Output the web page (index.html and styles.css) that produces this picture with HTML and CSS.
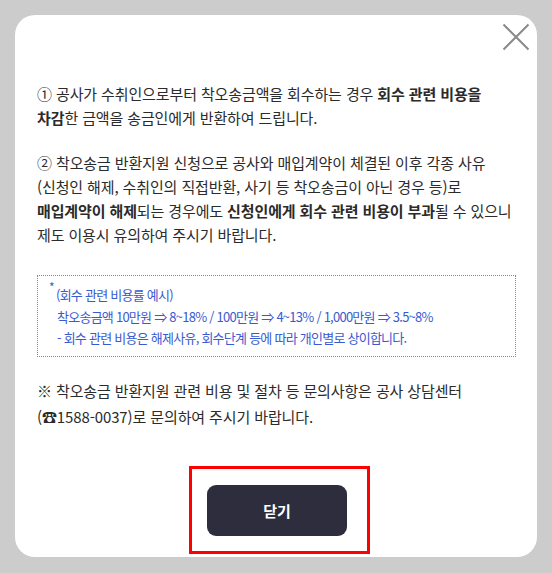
FILE: index.html
```html
<!DOCTYPE html>
<html lang="ko">
<head>
<meta charset="utf-8">
<link rel="stylesheet" href="styles.css">
</head>
<body>
<div class="page">
  <div class="card">
    <div class="card-head">
      <button class="close" aria-label="닫기">
        <svg width="28" height="28" viewBox="0 0 28 28"><path d="M1.5 1.5 L26.5 26.5 M26.5 1.5 L1.5 26.5" stroke="#8a8a8a" stroke-width="2" fill="none"/></svg>
      </button>
    </div>
    <div class="content">
      <p class="para">① 공사가 수취인으로부터 착오송금액을 회수하는 경우 <b>회수 관련 비용을</b><br><b>차감</b>한 금액을 송금인에게 반환하여 드립니다.</p>
      <p class="para">② 착오송금 반환지원 신청으로 공사와 매입계약이 체결된 이후 각종 사유<br>(신청인 해제, 수취인의 직접반환, 사기 등 착오송금이 아닌 경우 등)로<br><b>매입계약이 해제</b>되는 경우에도 <b>신청인에게 회수 관련 비용이 부과</b>될 수 있으니<br>제도 이용시 유의하여 주시기 바랍니다.</p>
      <div class="example">
        <p class="ex-title"><sup class="star">*</sup>(회수 관련 비용률 예시)</p>
        <p class="ex-line">착오송금액 10만원 ⇒ 8~18% / 100만원 ⇒ 4~13% / 1,000만원 ⇒ 3.5~8%</p>
        <p class="ex-line">- 회수 관련 비용은 해제사유, 회수단계 등에 따라 개인별로 상이합니다.</p>
      </div>
      <p class="note">※ 착오송금 반환지원 관련 비용 및 절차 등 문의사항은 공사 상담센터<br>(☎1588-0037)로 문의하여 주시기 바랍니다.</p>
    </div>
    <div class="footer">
      <div class="highlight">
        <button class="btn-close">닫기</button>
      </div>
    </div>
  </div>
</div>
</body>
</html>
```

FILE: styles.css
```css
* { box-sizing: border-box; }
html, body {
  margin: 0;
  padding: 0;
  background: #cccccc;
}
body {
  font-family: "Noto Sans CJK KR", "Noto Sans", sans-serif;
  color: #2b2b2b;
}
.page {
  padding: 15px 15px 16px 15px;
}
.card {
  background: #ffffff;
  border-radius: 20px;
  height: 542px;
  padding: 8px 21px 0 22px;
  display: flex;
  flex-direction: column;
}
.card-head {
  display: flex;
  justify-content: flex-end;
  margin-right: -14px;
  height: 28px;
}
.close {
  border: 0;
  background: none;
  padding: 0;
  width: 28px;
  height: 28px;
  cursor: pointer;
}
.close svg { display: block; }
.content {
  margin-top: 31px;
}
.para {
  margin: 0 0 21px 0;
  font-size: 15px;
  line-height: 24px;
  letter-spacing: -0.12px;
  white-space: nowrap;
}
.para b { font-weight: 700; }
.example {
  margin-top: 28px;
  border: 1px dotted #8a8a8a;
  padding: 8px 10px 7px 10px;
  color: #3a5ad0;
  font-size: 13px;
  line-height: 21.5px;
  letter-spacing: -0.75px;
}
.example p { margin: 0; white-space: nowrap; }
.ex-title { position: relative; padding-left: 8px; }
.star {
  position: absolute;
  left: 1px;
  top: -3px;
  font-size: 12px;
  line-height: 1;
  vertical-align: baseline;
}
.ex-line { padding-left: 9px; }
.note {
  margin: 21px 0 0 0;
  font-size: 15px;
  line-height: 26px;
  letter-spacing: -0.12px;
  white-space: nowrap;
}
.footer {
  margin-top: auto;
  display: flex;
  justify-content: center;
  padding-left: 6px;
  padding-bottom: 3px;
}
.highlight {
  border: 3px solid #ff0000;
  padding: 16px 20px 15px 15px;
}
.btn-close {
  display: block;
  width: 140px;
  height: 51px;
  border: 0;
  border-radius: 9px;
  background: #2e2d3d;
  color: #ffffff;
  font-family: "Noto Sans CJK KR", "Noto Sans", sans-serif;
  font-size: 15px;
  font-weight: 700;
  cursor: pointer;
}
```
